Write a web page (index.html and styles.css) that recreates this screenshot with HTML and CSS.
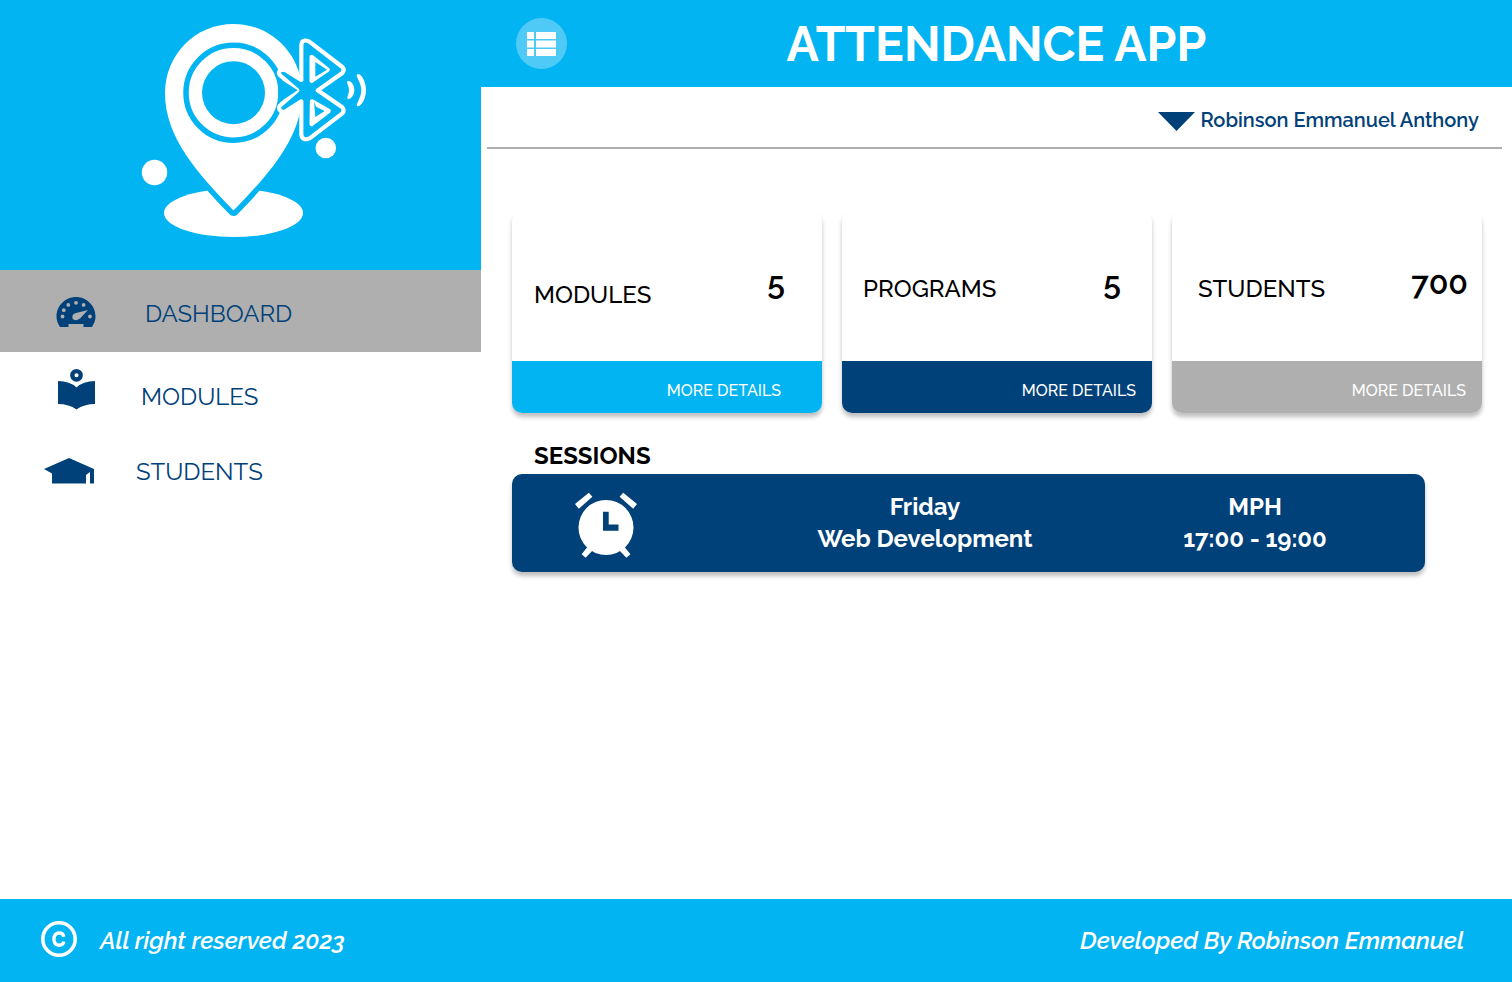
FILE: index.html
```html
<!DOCTYPE html>
<html lang="en">
<head>
<meta charset="utf-8">
<meta name="viewport" content="width=device-width, initial-scale=1">
<title>Attendance App</title>
<link rel="stylesheet" href="styles.css">
</head>
<body>
<div class="layout">
  <aside class="sidebar">
    <div class="brand">
      <svg class="logo" viewBox="140 20 228 220" role="img" aria-label="Attendance App logo">
        <ellipse cx="233.5" cy="213" rx="69.5" ry="24" fill="#fff"/>
        <path d="M233.5 24C195 24 165 55 165 93C165 137 197 173 233.5 210.500C270 173 302 137 302 93C302 55 272 24 233.500 24Z" fill="#fff" stroke="#03b4f2" stroke-width="11" stroke-linejoin="round" paint-order="stroke"/>
        <circle cx="233.5" cy="92.700" r="47.500" fill="none" stroke="#03b4f2" stroke-width="5.500"/>
        <circle cx="233.500" cy="92.700" r="31.500" fill="#03b4f2"/>
        <g transform="translate(265 30) scale(.33333)">
          <path d="M109 48Q109 25 132 34L232 111Q240 120 232 129L158 181L232 232Q240 241 232 250L134 325Q112 334 109 314V214L62 244Q50 249 43 238Q40 230 48 224L97 181L48 138Q38 130 44 123Q52 116 62 121L109 150Z" fill="#03b4f2" stroke="#fff" stroke-width="12.500" stroke-linejoin="round"/>
          <path d="M40 143L98 181L40 219Z" fill="#03b4f2"/>
          <path d="M140 81L188 119L140 152Z" fill="#fff" stroke="#fff" stroke-width="13" stroke-linejoin="round"/>
          <path d="M151 96L186 119L151 140Z" fill="#03b4f2"/>
          <path d="M141 214L191 243L140 282Z" fill="#fff" stroke="#fff" stroke-width="13" stroke-linejoin="round"/>
          <path d="M147 215L153 230L179 243L151 261Z" fill="#03b4f2"/>
          <path d="M248 153C258 151 268 164 268 180C268 194 258 209 249 207C243 203 252 194 252 180C252 166 243 158 248 153ZM278 132C290 132 303 155 303 180C303 205 290 228 278 229C268 226 289 205 289 180C289 155 268 137 278 132Z" fill="#fff"/>
        </g>
        <circle cx="154.500" cy="172.500" r="12.700" fill="#fff"/>
        <circle cx="325.800" cy="148" r="10.300" fill="#fff"/>
      </svg>
    </div>
    <nav class="menu" aria-label="Main">
      <a class="menu-item is-active" href="#dashboard">
        <svg class="menu-icon" viewBox="0 0 50 44" aria-hidden="true">
          <path d="M14.500 36H6C3 31 2.500 28 2.500 25.500C2.500 14.500 11.500 6 22 6S41.500 14.500 41.500 25.500C41.500 28 41 31 38 36H29.500V33H14.500Z" fill="#014179"/>
          <g fill="#afafaf"><circle cx="8.500" cy="25.500" r="1.900"/><circle cx="9.800" cy="19.200" r="1.900"/><circle cx="14.300" cy="13.900" r="1.900"/><circle cx="22" cy="11.800" r="1.900"/><circle cx="29.600" cy="13.900" r="1.900"/><circle cx="36" cy="25.500" r="1.900"/><path d="M34 19L26 27.500Q21 31 18.500 27.500Q17.500 23 22 22Z"/></g>
        </svg>
        <span>DASHBOARD</span>
      </a>
      <a class="menu-item menu-modules" href="#modules">
        <svg class="menu-icon" viewBox="0 0 50 44" aria-hidden="true">
          <circle cx="22.500" cy="8.300" r="4.200" fill="none" stroke="#014179" stroke-width="4.300"/>
          <path d="M4 14Q16 14 22.500 20.500Q29 14 41 14V37Q30 37 22.500 42.500Q15 37 4 37Z" fill="#014179"/>
        </svg>
        <span>MODULES</span>
      </a>
      <a class="menu-item menu-students" href="#students">
        <svg class="menu-icon menu-cap" viewBox="0 0 50 26" aria-hidden="true">
          <path d="M0 11L25 0L50 11V25.500H46V14L42 17V25.500H8V15.500Z" fill="#014179"/>
        </svg>
        <span>STUDENTS</span>
      </a>
    </nav>
  </aside>

  <main class="main">
    <header class="topbar">
      <button class="toggle" type="button" aria-label="Toggle menu">
        <svg viewBox="0 0 29 24" aria-hidden="true"><path d="M0 0H7V7H0ZM9 0H29V7H9ZM0 8.500H7V15.500H0ZM9 8.500H29V15.500H9ZM0 17H7V24H0ZM9 17H29V24H9Z" fill="#fff"/></svg>
      </button>
      <h1 class="title">ATTENDANCE APP</h1>
    </header>
    <div class="userbar">
      <button class="user" type="button">
        <svg class="caret" viewBox="0 0 37 19" aria-hidden="true"><path d="M0 0H37L18.500 19Z" fill="#014179"/></svg>
        <span>Robinson Emmanuel Anthony</span>
      </button>
    </div>

    <section class="cards" aria-label="Summary">
      <article class="card card-modules">
        <div class="card-body"><h2 class="card-name">MODULES</h2><p class="count">5</p></div>
        <a class="details details-sky" href="#modules">MORE DETAILS</a>
      </article>
      <article class="card card-programs">
        <div class="card-body"><h2 class="card-name">PROGRAMS</h2><p class="count">5</p></div>
        <a class="details details-navy" href="#programs">MORE DETAILS</a>
      </article>
      <article class="card card-students">
        <div class="card-body"><h2 class="card-name">STUDENTS</h2><p class="count">700</p></div>
        <a class="details details-gray" href="#students">MORE DETAILS</a>
      </article>
    </section>

    <section class="sessions">
      <h2 class="sessions-title">SESSIONS</h2>
      <div class="session">
        <svg class="clock" viewBox="0 0 62 66" aria-hidden="true">
          <g fill="#fff">
            <path d="M0 12L13.800 .700L17.400 4.700L3.800 16.700ZM62 12L48.200 .700L44.600 4.700L58.200 16.700Z"/>
            <path d="M6.600 62.300L10.600 65.700L19 57L14 53ZM55.400 62.300L51.400 65.700L43 57L48 53Z"/>
            <circle cx="31" cy="35.500" r="27.500"/>
          </g>
          <path d="M28 19.700H33.700V32.500H43.500V38.700H28Z" fill="#014179"/>
        </svg>
        <p class="session-text">Friday<br>Web Development</p>
        <p class="session-text">MPH<br>17:00 - 19:00</p>
      </div>
    </section>
  </main>
</div>

<footer class="footer">
  <p class="legal">
    <svg class="copyright" viewBox="0 0 36 36" role="img" aria-label="Copyright"><circle cx="18" cy="18" r="16.200" fill="none" stroke="#fff" stroke-width="3.600"/><path d="M22.800 15.800C22.400 13.200 20.600 12 18.200 12C14.800 12 12.900 14.400 12.900 18.100C12.900 21.900 14.800 24.200 18.200 24.200C20.600 24.200 22.400 23 22.800 20.500" fill="none" stroke="#fff" stroke-width="3.400"/></svg>
    <span>All right reserved 2023</span>
  </p>
  <p class="credit">Developed By Robinson Emmanuel</p>
</footer>
</body>
</html>
```

FILE: styles.css
```css
:root {
  --sky: #03b4f2;
  --navy: #014179;
  --gray: #afafaf;
  --shadow: 0 4px 4px rgba(0, 0, 0, 0.25);
}

* {
  box-sizing: border-box;
}

body {
  display: flex;
  flex-direction: column;
  min-height: 100vh;
  margin: 0;
  background: #fff;
  color: #000;
  font-family: Raleway, Lato, sans-serif;
  font-size: 24px;
  line-height: 32px;
}

h1, h2, p {
  margin: 0;
}

a {
  color: inherit;
  text-decoration: none;
}

button {
  padding: 0;
  border: 0;
  background: none;
  color: inherit;
  font: inherit;
  cursor: pointer;
}

svg {
  display: block;
  flex: none;
}

.layout {
  display: grid;
  flex: 1;
  grid-template-columns: 481px minmax(0, 1fr);
}

.brand {
  height: 270px;
  padding: 20px 0 0 140px;
  background: var(--sky);
}

.logo {
  width: 228px;
  height: 220px;
}

.menu-item {
  display: flex;
  align-items: center;
  height: 82px;
  padding: 6px 0 0 54px;
  gap: 41px;
  color: var(--navy);
}

.menu-item.is-active {
  background: var(--gray);
}

.menu-icon {
  width: 50px;
  height: 44px;
  margin-bottom: 2px;
}

.menu-modules {
  padding-top: 8px;
  gap: 37px;
}

.menu-modules .menu-icon {
  margin-bottom: 16px;
}

.menu-students {
  height: 74px;
  padding: 2px 0 0 44px;
  gap: 42px;
}

.menu-students .menu-cap {
  height: 26px;
  margin-bottom: 2px;
}

.topbar {
  display: grid;
  grid-template-columns: 51px 1fr 51px;
  align-items: center;
  height: 87px;
  padding: 0 35px;
  background: var(--sky);
  color: #fff;
}

.toggle {
  display: grid;
  place-items: center;
  width: 51px;
  height: 51px;
  border-radius: 50%;
  background: rgba(255, 255, 255, 0.3);
}

.toggle svg {
  width: 29px;
  height: 24px;
}

.title {
  font-size: 48px;
  font-weight: 700;
  line-height: 56px;
  text-align: center;
}

.userbar {
  display: flex;
  justify-content: flex-end;
  height: 62px;
  margin: 0 10px 0 6px;
  padding: 6px 23px 0 0;
  border-bottom: 2px solid var(--gray);
}

.user {
  display: flex;
  align-items: center;
  gap: 6px;
  color: var(--navy);
  font-size: 20px;
  font-weight: 600;
}

.caret {
  width: 37px;
  height: 19px;
  margin-top: 2px;
}

.cards {
  display: grid;
  grid-template-columns: repeat(3, minmax(0, 1fr));
  gap: 20px;
  padding: 62px 30px 0 31px;
}

.card {
  overflow: hidden;
  border-radius: 10px;
  box-shadow: var(--shadow);
}

.card-body {
  display: flex;
  justify-content: space-between;
  height: 150px;
  padding: 56px 31px 0 21px;
}

.card-name {
  padding-top: 6px;
  font-size: 24px;
  font-weight: 500;
}

.card-modules .card-body {
  padding-right: 37px;
  padding-left: 22px;
}

.card-modules .card-name {
  padding-top: 12px;
}

.card-students .card-body {
  padding-right: 14px;
  padding-left: 26px;
}

.count {
  font-size: 32px;
  font-weight: 600;
}

.details {
  display: block;
  height: 52px;
  padding: 14px 16px 0 0;
  color: #fff;
  font-size: 16px;
  font-weight: 500;
  text-align: right;
}

.card-modules .details {
  padding-right: 41px;
}

.details-sky {
  background: var(--sky);
}

.details-navy {
  background: var(--navy);
}

.details-gray {
  background: var(--gray);
}

.sessions {
  padding: 27px 87px 0 31px;
}

.sessions-title {
  padding: 0 0 2px 22px;
  font-size: 24px;
  font-weight: 700;
}

.session {
  display: grid;
  grid-template-columns: 248px minmax(0, 1fr) minmax(0, 1fr);
  align-items: center;
  height: 98px;
  padding-right: 5px;
  border-radius: 10px;
  background: var(--navy);
  box-shadow: var(--shadow);
  color: #fff;
}

.clock {
  width: 62px;
  height: 66px;
  margin: 4px 0 0 63px;
}

.session-text {
  font-weight: 700;
  text-align: center;
}

.footer {
  display: flex;
  align-items: center;
  justify-content: space-between;
  height: 83px;
  padding: 0 48px 0 41px;
  background: var(--sky);
  color: #fff;
  font-style: italic;
  font-weight: 600;
}

.legal {
  display: flex;
  align-items: center;
  gap: 23px;
}

.copyright {
  width: 36px;
  height: 36px;
  margin-bottom: 4px;
}
```
